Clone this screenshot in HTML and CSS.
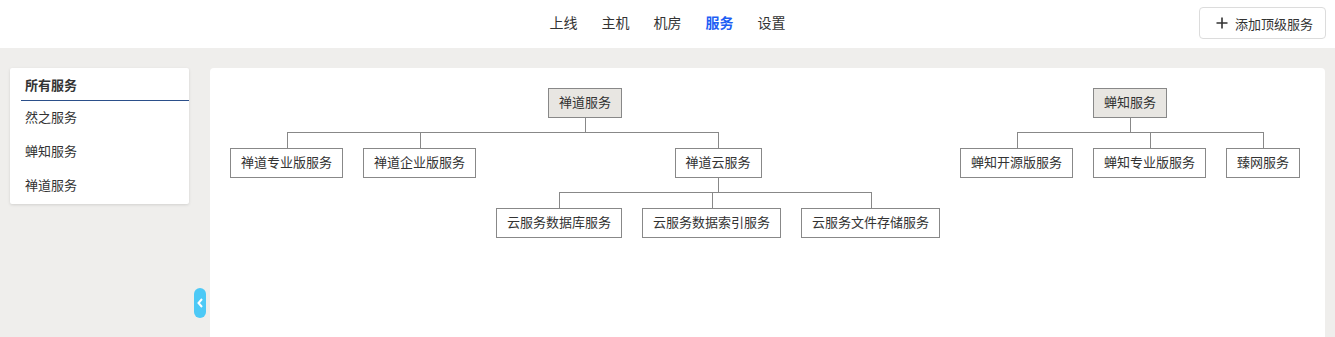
FILE: index.html
```html
<!DOCTYPE html>
<html lang="zh-CN">
<head>
    <meta charset="UTF-8">
    <meta name="viewport" content="width=device-width, initial-scale=1.0">
    <title>服务</title>
    <link rel="stylesheet" href="styles.css">
</head>
<body>
    <div class="header">
        <div class="nav">
            <a class="nav-item">上线</a>
            <a class="nav-item">主机</a>
            <a class="nav-item">机房</a>
            <a class="nav-item active">服务</a>
            <a class="nav-item">设置</a>
        </div>
        <button class="add-btn">
            <svg width="12" height="12" viewBox="0 0 12 12"><path d="M6 0.5V11.5M0.5 6H11.5" stroke="#333" stroke-width="1.6" fill="none"/></svg>
            添加顶级服务
        </button>
    </div>

    <div class="content">
        <div class="sidebar">
            <div class="side-title"><span>所有服务</span></div>
            <div class="side-item">然之服务</div>
            <div class="side-item">蝉知服务</div>
            <div class="side-item">禅道服务</div>
        </div>
        <div class="toggle">
            <svg width="6" height="10" viewBox="0 0 6 10"><path d="M5 1L1.5 5L5 9" stroke="#fff" stroke-width="2" fill="none"/></svg>
        </div>
        <div class="main">
            <div class="tree">
                <div class="tree-node">
                    <div class="box root">禅道服务</div>
                    <div class="tree-children">
                        <div class="tree-node"><div class="box">禅道专业版服务</div></div>
                        <div class="tree-node"><div class="box">禅道企业版服务</div></div>
                        <div class="tree-node">
                            <div class="box">禅道云服务</div>
                            <div class="tree-children">
                                <div class="tree-node"><div class="box">云服务数据库服务</div></div>
                                <div class="tree-node"><div class="box">云服务数据索引服务</div></div>
                                <div class="tree-node"><div class="box">云服务文件存储服务</div></div>
                            </div>
                        </div>
                    </div>
                </div>
                <div class="tree-node">
                    <div class="box root">蝉知服务</div>
                    <div class="tree-children">
                        <div class="tree-node"><div class="box">蝉知开源版服务</div></div>
                        <div class="tree-node"><div class="box">蝉知专业版服务</div></div>
                        <div class="tree-node"><div class="box">臻网服务</div></div>
                    </div>
                </div>
            </div>
        </div>
    </div>
</body>
</html>
```
FILE: styles.css
```css
body {
    margin: 0;
    background-color: #efeeec;
    font-family: "Liberation Sans", "Noto Sans CJK SC", sans-serif;
    font-size: 13px;
    color: #333;
}
.header {
    position: relative;
    display: flex;
    align-items: center;
    justify-content: center;
    height: 48px;
    background-color: #fff;
}
.nav {
    display: flex;
    gap: 24px;
    margin-top: -2px;
}
.nav-item {
    font-size: 14px;
    line-height: 20px;
    color: #333;
    cursor: pointer;
}
.nav-item.active {
    color: #1e5ef4;
    font-weight: bold;
}
.add-btn {
    position: absolute;
    right: 9px;
    top: 7px;
    display: flex;
    align-items: center;
    gap: 7px;
    height: 32px;
    padding: 0 12px 0 16px;
    background: #fff;
    border: 1px solid #dcdcdc;
    border-radius: 4px;
    font-family: inherit;
    font-size: 13px;
    color: #333;
}
.content {
    position: relative;
    display: flex;
    gap: 21px;
    padding: 20px 10px 0;
}
.sidebar {
    width: 179px;
    flex-shrink: 0;
    align-self: flex-start;
    padding-bottom: 1px;
    background: #fff;
    border-radius: 2px;
    box-shadow: 0 1px 3px rgba(0, 0, 0, 0.12);
}
.side-title {
    margin-left: 11px;
    height: 32px;
    border-bottom: 1px solid #2b4f8a;
    display: flex;
    align-items: center;
}
.side-title span {
    padding-left: 4px;
    font-weight: bold;
}
.side-item {
    height: 34px;
    line-height: 34px;
    padding-left: 15px;
}
.toggle {
    position: absolute;
    left: 194px;
    top: 240px;
    width: 12px;
    height: 30px;
    background: #4dc9f6;
    border-radius: 6px;
    display: flex;
    align-items: center;
    justify-content: center;
}
.main {
    flex: 1;
    min-width: 0;
    min-height: calc(100vh - 68px);
    background: #fff;
    border-radius: 4px 4px 0 0;
    padding: 20px 20px 0;
    box-sizing: border-box;
}
.tree {
    display: flex;
    gap: 20px;
}
.tree-node {
    position: relative;
    display: flex;
    flex-direction: column;
    align-items: center;
}
.box {
    height: 28px;
    line-height: 28px;
    padding: 0 10px;
    border: 1px solid #888;
    background: #fff;
    white-space: nowrap;
}
.box.root {
    background: #e8e6e2;
}
.tree-children {
    position: relative;
    display: flex;
    gap: 20px;
    padding-top: 14px;
}
.tree-children::before {
    content: '';
    position: absolute;
    top: 0;
    left: 50%;
    height: 14px;
    border-left: 1px solid #888;
}
.tree-children > .tree-node {
    padding-top: 16px;
}
.tree-children > .tree-node::before {
    content: '';
    position: absolute;
    top: 0;
    left: -10px;
    right: -10px;
    border-top: 1px solid #888;
}
.tree-children > .tree-node:first-child::before {
    left: 50%;
}
.tree-children > .tree-node:last-child::before {
    right: 50%;
}
.tree-children > .tree-node::after {
    content: '';
    position: absolute;
    top: 0;
    left: 50%;
    height: 16px;
    border-left: 1px solid #888;
}
```
